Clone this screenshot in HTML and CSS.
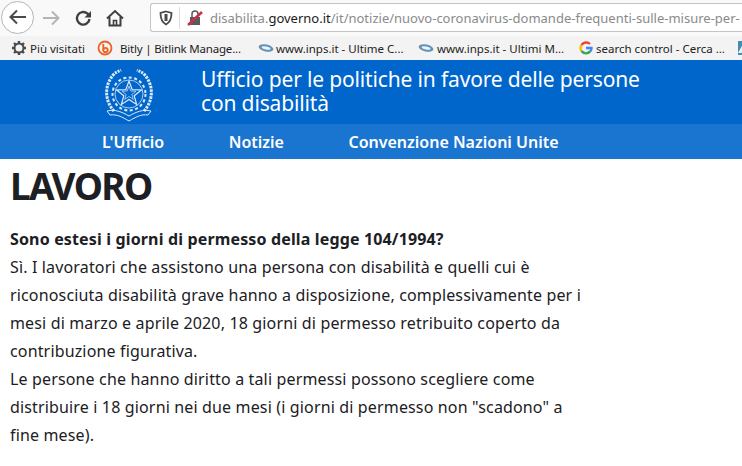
FILE: index.html
```html
<!DOCTYPE html>
<html lang="it">
<head>
    <meta charset="UTF-8">
    <title>Lavoro</title>
    <link rel="stylesheet" href="styles.css">
</head>
<body>
    <div class="toolbar">
        <span class="back">
            <svg width="20" height="20" viewBox="0 0 20 20" fill="none" stroke="#4a4a4a" stroke-width="2"><path d="M18 10H3M9 3.500L2.500 10 9 16.500"/></svg>
        </span>
        <svg class="tool tool-fwd" width="20" height="20" viewBox="0 0 20 20" fill="none" stroke="#b4b4b4" stroke-width="2"><path d="M2 10h15M11 3.500l6.500 6.500-6.500 6.500"/></svg>
        <svg class="tool" width="20" height="20" viewBox="0 0 20 20" fill="none" stroke="#3f3f3f" stroke-width="2.400"><path d="M16.500 11a6.300 6.300 0 1 1-2.200-5.500l1.500 1.500"/><path d="M18 3v6.500h-6.500z" fill="#3f3f3f" stroke="none"/></svg>
        <svg class="tool" width="20" height="20" viewBox="0 0 20 20" fill="none" stroke="#3f3f3f" stroke-width="2"><path d="M2 10.500l8-7.500 8 7.500"/><path d="M4.500 9v8.500h11V9"/><path d="M8.500 17.500v-5h3v5" stroke-width="1.600"/></svg>
        <div class="urlbar">
            <svg width="14" height="16" viewBox="0 0 14 16" fill="none" stroke="#4a4a4a" stroke-width="1.800"><path d="M7 1.500l5.500 1.500c0 5-1 9-5.500 11.500C2.500 12 1.500 8 1.500 3z"/><path d="M7 4v7" stroke-width="3"/></svg>
            <span class="url-sep"></span>
            <svg class="lock" width="16" height="16" viewBox="0 0 16 16"><path d="M3 7h10v8H3z" fill="#5a5a5a"/><path d="M5 7V4a3 3 0 0 1 6 0v3" fill="none" stroke="#5a5a5a" stroke-width="1.500"/><path d="M1 15L15 2" stroke="#c8304f" stroke-width="2.500"/></svg>
            <span class="url">disabilita.<b>governo.it</b>/it/notizie/nuovo-coronavirus-domande-frequenti-sulle-misure-per-</span>
        </div>
    </div>

    <div class="bookmarks">
        <span class="bm bm-first">
            <svg width="16" height="16" viewBox="0 0 16 16"><path d="M8 1v14M1 8h14M3 3l10 10M13 3L3 13" stroke="#4a4a4a" stroke-width="2.400"/><circle cx="8" cy="8" r="4.500" fill="#f3f3f3" stroke="#4a4a4a" stroke-width="2"/></svg>
            Più visitati
        </span>
        <span class="bm bm-bitly">
            <svg width="16" height="16" viewBox="0 0 16 16" fill="none" stroke="#ee6123" stroke-width="1.800"><circle cx="8" cy="8" r="6.500"/><circle cx="8.500" cy="10" r="2.200"/><path d="M6.300 4v6"/></svg>
            <span class="bm-tight">Bitly | Bitlink Manage...</span>
        </span>
        <span class="bm bm-inps">
            <svg width="16" height="10" viewBox="0 0 16 10"><ellipse cx="8" cy="5" rx="7.500" ry="3.500" transform="rotate(12 8 5)" fill="#5f93b8"/><ellipse cx="8" cy="5" rx="4.500" ry="1.500" transform="rotate(12 8 5)" fill="#eef3f7"/></svg>
            www.inps.it - Ultime C...
        </span>
        <span class="bm bm-inps2">
            <svg width="16" height="10" viewBox="0 0 16 10"><ellipse cx="8" cy="5" rx="7.500" ry="3.500" transform="rotate(12 8 5)" fill="#5f93b8"/><ellipse cx="8" cy="5" rx="4.500" ry="1.500" transform="rotate(12 8 5)" fill="#eef3f7"/></svg>
            www.inps.it - Ultimi M...
        </span>
        <span class="bm bm-google">
            <svg width="14" height="14" viewBox="0 0 14 14" fill="none" stroke-width="2.400"><path d="M11 3A5.500 5.500 0 0 0 2.500 4" stroke="#ea4335"/><path d="M2.500 4a5.500 5.500 0 0 0 0 6" stroke="#fbbc05"/><path d="M2.500 10A5.500 5.500 0 0 0 11.500 10" stroke="#34a853"/><path d="M11.500 10c.8-1 1-2 1-3H7" stroke="#4285f4"/></svg>
            search control - Cerca ...
        </span>
        <svg class="bm-last" width="6" height="14" viewBox="0 0 6 14"><path d="M0 0h6v14H0z" fill="#3f8fb5"/><path d="M0 12L5 3l1 2v7z" fill="#e8f3f8"/></svg>
    </div>

    <header class="site-head">
        <svg class="emblem" width="50" height="55" viewBox="0 0 50 55" fill="none" stroke="#dbe9f8" stroke-width="1">
            <!-- wreath -->
            <path d="M10 44C0 33 0 17 11 6" stroke-width="3" stroke-dasharray="2.500 1"/>
            <path d="M40 44c10-11 10-27-1-38" stroke-width="3" stroke-dasharray="2.500 1"/>
            <path d="M11 6l6-3M39 6l-6-3" stroke-width="3" stroke-dasharray="2 1"/>
            <!-- gear and star -->
            <circle cx="25" cy="27" r="16.500" stroke-width="2" stroke-dasharray="3 2.500"/>
            <circle cx="25" cy="27" r="14" stroke-width=".8"/>
            <path d="M25 14l3.200 8.600 9.200.4-7.200 5.700 2.400 8.800-7.600-5-7.600 5 2.400-8.800-7.200-5.700 9.200-.4z" stroke-width="1.200"/>
            <path d="M25 19l1.800 5 5.200.2-4.100 3.200 1.400 5-4.300-2.900-4.300 2.900 1.400-5-4.100-3.200 5.200-.2z" stroke-width=".7"/>
            <!-- ribbon -->
            <path d="M3 44c8-2 15 1 22 5 7-4 14-7 22-5l-3 4c-7-1-12 2-19 6-7-4-12-7-19-6z" stroke-width="1"/>
        </svg>
        <h2 class="site-title">Ufficio per le politiche in favore delle persone con disabilità</h2>
    </header>

    <nav class="site-nav">
        <a href="#">L'Ufficio</a>
        <a href="#">Notizie</a>
        <a href="#">Convenzione Nazioni Unite</a>
    </nav>

    <main class="content">
        <h1>LAVORO</h1>
        <p class="question">Sono estesi i giorni di permesso della legge 104/1994?</p>
        <p>Sì. I lavoratori che assistono una persona con disabilità e quelli cui è<br>riconosciuta disabilità grave hanno a disposizione, complessivamente per i<br>mesi di marzo e aprile 2020, 18 giorni di permesso retribuito coperto da<br>contribuzione figurativa.</p>
        <p>Le persone che hanno diritto a tali permessi possono scegliere come<br>distribuire i 18 giorni nei due mesi (i giorni di permesso non "scadono" a<br>fine mese).</p>
    </main>
</body>
</html>
```

FILE: styles.css
```css
* {
    margin: 0;
    padding: 0;
    box-sizing: border-box;
}

html, body {
    height: 466px;
    overflow: hidden;
}

body {
    background: #fff;
    font-family: 'Noto Sans', sans-serif;
    color: #1c2024;
}

.toolbar {
    height: 36px;
    background: #f9f9fa;
    display: flex;
    align-items: center;
    padding-left: 1px;
    overflow: hidden;
}

.back {
    width: 33px;
    height: 33px;
    margin-bottom: 2px;
    border: 1px solid #b5b5b5;
    border-radius: 50%;
    background: #fff;
    display: flex;
    align-items: center;
    justify-content: center;
    flex-shrink: 0;
}

.tool {
    flex-shrink: 0;
    margin-left: 12px;
}

.tool-fwd {
    margin-left: 7px;
}

.urlbar {
    flex: 1;
    margin-left: 25px;
    margin-bottom: 1px;
    height: 29px;
    background: #fff;
    border: 1px solid #c4c4c4;
    border-right: none;
    border-radius: 3px 0 0 3px;
    display: flex;
    align-items: center;
    padding-left: 8px;
    white-space: nowrap;
    overflow: hidden;
}

.url-sep {
    width: 1px;
    height: 22px;
    background: #dcdcdc;
    margin: 0 7px 0 6px;
    flex-shrink: 0;
}

.lock {
    flex-shrink: 0;
    margin-right: 7px;
}

.url {
    font-size: 13px;
    color: #8a8a8a;
}

.url b {
    font-weight: 400;
    color: #1a1a1a;
}

.bookmarks {
    height: 24px;
    background: #f3f3f3;
    display: flex;
    align-items: center;
    font-size: 11.500px;
    color: #222;
    white-space: nowrap;
    overflow: hidden;
    padding-left: 11px;
}

.bm {
    display: flex;
    align-items: center;
    gap: 3px;
    flex-shrink: 0;
}

.bm-bitly {
    margin-left: 12px;
    width: 161px;
    gap: 7px;
}

.bm-tight {
    letter-spacing: -0.2px;
}

.bm-inps {
    width: 160px;
    gap: 2px;
}

.bm-inps2 {
    width: 161px;
    gap: 3px;
}

.bm-google {
    width: 159px;
    gap: 3px;
}

.bm-last {
    flex-shrink: 0;
}

.site-head {
    height: 64px;
    background: #0066cc;
    display: flex;
    align-items: center;
    padding-left: 104px;
}

.emblem {
    flex-shrink: 0;
    margin-top: 4px;
}

.site-title {
    font-weight: 400;
    font-size: 21px;
    line-height: 24px;
    letter-spacing: -0.15px;
    color: #fff;
    width: 470px;
    margin-left: 47px;
    margin-top: -2px;
}

.site-nav {
    height: 35px;
    background: #1a75d1;
    display: flex;
    align-items: center;
    padding-left: 102px;
    gap: 64.500px;
}

.site-nav a {
    color: #fff;
    font-weight: 600;
    font-size: 16px;
    text-decoration: none;
}

.content {
    padding-left: 10px;
    font-size: 16px;
    line-height: 28px;
    letter-spacing: 0.15px;
    width: 600px;
    white-space: nowrap;
}

.content h1 {
    font-size: 37px;
    line-height: 54px;
    font-weight: 700;
    letter-spacing: -1.600px;
    margin-bottom: 12px;
}

.question {
    font-weight: 700;
}
```
